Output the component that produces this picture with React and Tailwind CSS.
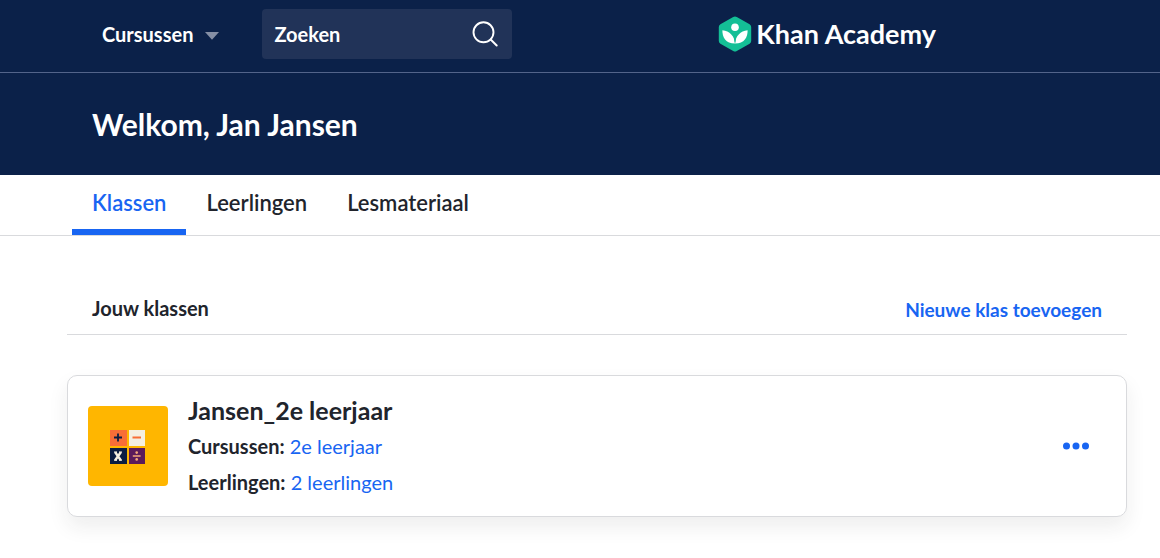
function LogoMark() {
  return (
    <svg width="34" height="36" viewBox="0 0 34 36" aria-hidden="true">
      <path
        d="M15.2 0.9a3.6 3.6 0 0 1 3.6 0l12.8 7.3a3.2 3.2 0 0 1 1.6 2.8v14a3.2 3.2 0 0 1-1.6 2.8l-12.8 7.3a3.6 3.6 0 0 1-3.6 0L2.4 27.8A3.2 3.2 0 0 1 0.8 25V11a3.2 3.2 0 0 1 1.6-2.8z"
        fill="#14bf96"
      />
      <circle cx="17" cy="11.2" r="3.8" fill="#fff" />
      <path d="M17 27.6C16.6 20.4 11.6 15 4.4 14.3C4.2 21.4 7.6 27.6 17 27.6z" fill="#fff" />
      <path d="M17 27.6C17.4 20.4 22.4 15 29.6 14.3C29.8 21.4 26.4 27.6 17 27.6z" fill="#fff" />
      <path d="M17 18.2C15.9 21 15.9 24.6 17 27.6C18.1 24.6 18.1 21 17 18.2z" fill="#14bf96" />
    </svg>
  );
}

function ClassIcon() {
  return (
    <svg width="80" height="80" viewBox="0 0 80 80" className="shrink-0 rounded" aria-hidden="true">
      <rect width="80" height="80" fill="#ffb600" />
      <rect x="22" y="24" width="17" height="16" fill="#f86e37" />
      <rect x="41" y="24" width="16" height="16" fill="#f5efe1" />
      <rect x="22" y="42" width="17" height="16" fill="#0a1d42" />
      <rect x="41" y="42" width="16" height="16" fill="#5b1a5b" />
      <path d="M26 31.5h8M30 27.5v8" stroke="#0a1d42" strokeWidth="1.8" />
      <path d="M44.5 31.5h8.5" stroke="#f86e37" strokeWidth="2.2" />
      <path d="M27.2 46.2l5.6 8M32.8 46.2l-5.6 8" stroke="#f5efe1" strokeWidth="2.4" />
      <path d="M26 46.2h3M31 46.2h3M26 54.2h3M31 54.2h3" stroke="#f5efe1" strokeWidth="1.2" />
      <path d="M44.8 50h7.8" stroke="#f6a878" strokeWidth="1.6" />
      <circle cx="48.7" cy="46.6" r="1.3" fill="#f6a878" />
      <circle cx="48.7" cy="53.4" r="1.3" fill="#f6a878" />
    </svg>
  );
}

const tabs = ["Klassen", "Leerlingen", "Lesmateriaal"];

export default function App() {
  return (
    <div className="min-h-screen bg-white font-['Lato',sans-serif] text-xl text-[#21242c]">
      <header className="flex items-center border-b border-[#53648a] bg-[#0b2149] pt-[9px] pr-56 pb-[13px] pl-[102px] text-white">
        <button type="button" className="flex items-center gap-3 font-bold">
          Cursussen
          <svg width="14" height="8" viewBox="0 0 14 8" className="mt-1" aria-hidden="true">
            <path d="M0 0h14L7 7.8z" fill="#858fa5" />
          </svg>
        </button>
        <label className="ml-[43px] flex h-[50px] w-[250px] items-center rounded bg-[#213358] pr-3.5 pl-3">
          <input
            type="search"
            aria-label="Zoeken"
            placeholder="Zoeken"
            className="min-w-0 flex-1 bg-transparent font-bold outline-none placeholder:text-white placeholder:opacity-100"
          />
          <svg width="26" height="26" viewBox="0 0 26 26" fill="none" stroke="#fff" strokeWidth="1.9" strokeLinecap="round" aria-hidden="true">
            <circle cx="11.5" cy="11.3" r="10" />
            <path d="M18.7 18.5l6 6" />
          </svg>
        </label>
        <a href="#home" className="ml-auto flex items-center gap-1 text-[27px] leading-9 font-bold">
          <LogoMark />
          Khan Academy
        </a>
      </header>

      <div className="bg-[#0b2149] px-[92px] py-8 text-white">
        <h1 className="text-[30px] leading-[38px] font-bold">Welkom, Jan Jansen</h1>
      </div>

      <nav className="flex border-b border-[#d9dadd] pl-[72px] text-[22px] leading-7 font-semibold">
        {tabs.map((tab, i) => (
          <a
            key={tab}
            href={"#" + tab.toLowerCase()}
            aria-current={i === 0 ? "page" : undefined}
            className={
              i === 0
                ? "border-b-6 border-[#1865f2] px-5 pt-3.5 pb-3 text-[#1865f2]"
                : "border-b-6 border-transparent px-5 pt-3.5 pb-3"
            }
          >
            {tab}
          </a>
        ))}
      </nav>

      <main className="pt-[58px] pr-[33px] pb-10 pl-[67px]">
        <div className="flex items-end justify-between border-b border-[#d9dadd] px-[25px] pb-3">
          <h2 className="leading-7 font-bold">Jouw klassen</h2>
          <button type="button" className="text-[19px] leading-6 font-bold text-[#1865f2]">
            Nieuwe klas toevoegen
          </button>
        </div>

        <article className="mt-10 flex items-center gap-5 rounded-[10px] border border-[#d9dadd] py-4 pr-9 pl-5 shadow-[0_10px_20px_rgba(33,36,44,0.08)]">
          <ClassIcon />
          <div className="flex-1">
            <h3 className="text-[25px] leading-9 font-bold">Jansen_2e leerjaar</h3>
            <p className="leading-9">
              <span className="font-bold">Cursussen:</span>{" "}
              <a href="#cursus" className="text-[#1865f2]">2e leerjaar</a>
            </p>
            <p className="leading-9">
              <span className="font-bold">Leerlingen:</span>{" "}
              <a href="#leerlingen" className="text-[#1865f2]">2 leerlingen</a>
            </p>
          </div>
          <button type="button" aria-label="Meer opties">
            <svg width="28" height="8" viewBox="0 0 28 8" fill="#1865f2" aria-hidden="true">
              <circle cx="4.5" cy="4" r="3.5" />
              <circle cx="14" cy="4" r="3.5" />
              <circle cx="23.5" cy="4" r="3.5" />
            </svg>
          </button>
        </article>
      </main>
    </div>
  );
}
